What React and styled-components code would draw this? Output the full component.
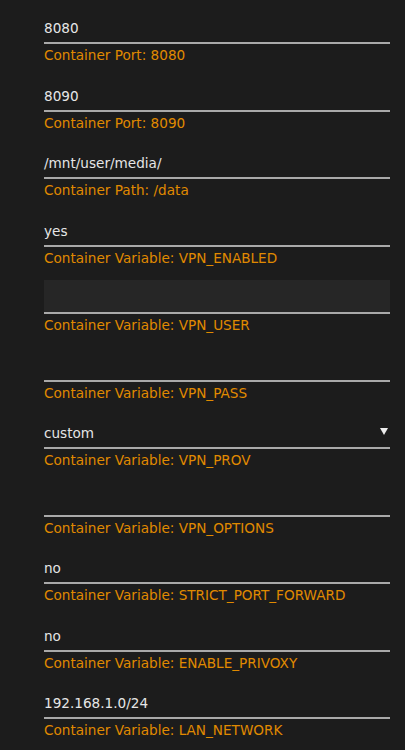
import React from "react";
import styled, { createGlobalStyle } from "styled-components";

const Global = createGlobalStyle`
  html, body { margin: 0; padding: 0; background: #1c1c1c; }
  body { font-family: "DejaVu Sans", "Liberation Sans", sans-serif; }
`;

const Page = styled.div`
  background: #1c1c1c;
  min-height: 750px;
  padding: 10px 15px 0 44px;
  box-sizing: border-box;
  width: 405px;
`;

const Row = styled.div`
  display: flex;
  flex-direction: column;
  margin-bottom: 13.5px;
`;

const Field = styled.div`
  height: 34px;
  box-sizing: border-box;
  display: flex;
  align-items: center;
  justify-content: space-between;
  background: ${(p) => (p.$focused ? "#262626" : "transparent")};
  border-bottom: 2px solid #a9a9a9;
  color: #e6e6e6;
  font-size: 13.6px;
  line-height: 18px;
  padding-top: 4px;
`;

const Arrow = styled.span`
  width: 0;
  height: 0;
  margin-right: 2px;
  margin-top: -3px;
  border-left: 4px solid transparent;
  border-right: 4px solid transparent;
  border-top: 7px solid #ececec;
`;

const Label = styled.div`
  color: #e08a00;
  font-size: 13.6px;
  line-height: 18px;
  margin-top: 2px;
  white-space: nowrap;
`;

const rows = [
  { value: "8080", label: "Container Port: 8080" },
  { value: "8090", label: "Container Port: 8090" },
  { value: "/mnt/user/media/", label: "Container Path: /data" },
  { value: "yes", label: "Container Variable: VPN_ENABLED" },
  { value: "", label: "Container Variable: VPN_USER", focused: true },
  { value: "", label: "Container Variable: VPN_PASS" },
  { value: "custom", label: "Container Variable: VPN_PROV", select: true },
  { value: "", label: "Container Variable: VPN_OPTIONS" },
  { value: "no", label: "Container Variable: STRICT_PORT_FORWARD" },
  { value: "no", label: "Container Variable: ENABLE_PRIVOXY" },
  { value: "192.168.1.0/24", label: "Container Variable: LAN_NETWORK" },
];

export default function App() {
  return (
    <>
      <Global />
      <Page>
        {rows.map((r, i) => (
          <Row key={i}>
            <Field $focused={r.focused}>
              <span>{r.value}</span>
              {r.select && <Arrow />}
            </Field>
            <Label>{r.label}</Label>
          </Row>
        ))}
      </Page>
    </>
  );
}
